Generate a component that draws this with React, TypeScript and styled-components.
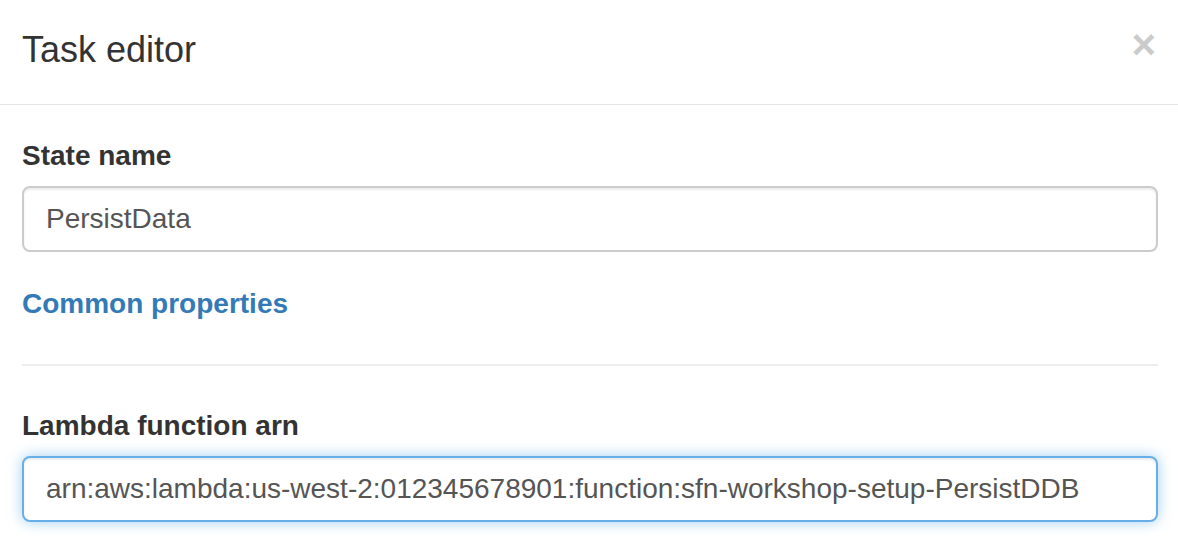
import React from 'react'
import styled, { createGlobalStyle } from 'styled-components'

const GlobalStyle = createGlobalStyle`
	html, body {
		margin: 0;
		padding: 0;
		background: #fff;
	}
	body {
		font-family: 'Liberation Sans', Arial, Helvetica, sans-serif;
		color: #333;
	}
	* {
		box-sizing: border-box;
	}
`

const Modal = styled.div`
	width: 1178px;
	height: 556px;
	overflow: hidden;
	background: #fff;
`

const Header = styled.div`
	display: flex;
	justify-content: space-between;
	align-items: flex-start;
	height: 105px;
	padding: 30px 22px 0 22px;
	border-bottom: 1px solid #e5e5e5;
`

const Title = styled.h4`
	margin: 0;
	font-size: 36px;
	font-weight: 400;
	line-height: 1.1;
	color: #333;
`

const CloseButton = styled.button`
	margin: -6px 0 0 0;
	padding: 0;
	border: 0;
	background: transparent;
	font-family: 'Liberation Sans', Arial, sans-serif;
	font-size: 42px;
	font-weight: 700;
	line-height: 1;
	color: #000;
	opacity: 0.2;
	cursor: pointer;
`

const Body = styled.div`
	padding: 31px 20px 0 22px;
`

const FormGroup = styled.div`
	display: flex;
	flex-direction: column;
	margin-bottom: 32px;
`

const Label = styled.label`
	display: block;
	margin-bottom: 10px;
	font-size: 28px;
	font-weight: 700;
	line-height: 40px;
	color: #333;
`

const Input = styled.input<{ $focused?: boolean }>`
	display: block;
	width: 100%;
	height: 66px;
	padding: 0 22px;
	font-family: 'Liberation Sans', Arial, sans-serif;
	font-size: 28px;
	color: #555;
	background: #fff;
	border: 2px solid ${({ $focused }) => ($focused ? '#66afe9' : '#ccc')};
	border-radius: 8px;
	outline: none;
	box-shadow: ${({ $focused }) =>
		$focused
			? 'inset 0 2px 2px rgba(0,0,0,.075), 0 0 14px rgba(102,175,233,.6)'
			: 'inset 0 2px 2px rgba(0,0,0,.075)'};
`

const Link = styled.a`
	display: block;
	font-size: 28px;
	font-weight: 700;
	line-height: 40px;
	color: #337ab7;
	text-decoration: none;
	cursor: pointer;
`

const Divider = styled.hr`
	margin: 40px 0;
	border: 0;
	border-top: 2px solid #eee;
`

const App = () => {
	return (
		<Modal>
			<GlobalStyle />
			<Header>
				<Title>Task editor</Title>
				<CloseButton type='button' aria-label='Close'>
					×
				</CloseButton>
			</Header>
			<Body>
				<FormGroup>
					<Label htmlFor='state-name'>State name</Label>
					<Input id='state-name' defaultValue='PersistData' />
				</FormGroup>
				<Link>Common properties</Link>
				<Divider />
				<FormGroup>
					<Label htmlFor='lambda-arn'>Lambda function arn</Label>
					<Input
						id='lambda-arn'
						$focused
						defaultValue='arn:aws:lambda:us-west-2:012345678901:function:sfn-workshop-setup-PersistDDB'
					/>
				</FormGroup>
			</Body>
		</Modal>
	)
}

export default App
